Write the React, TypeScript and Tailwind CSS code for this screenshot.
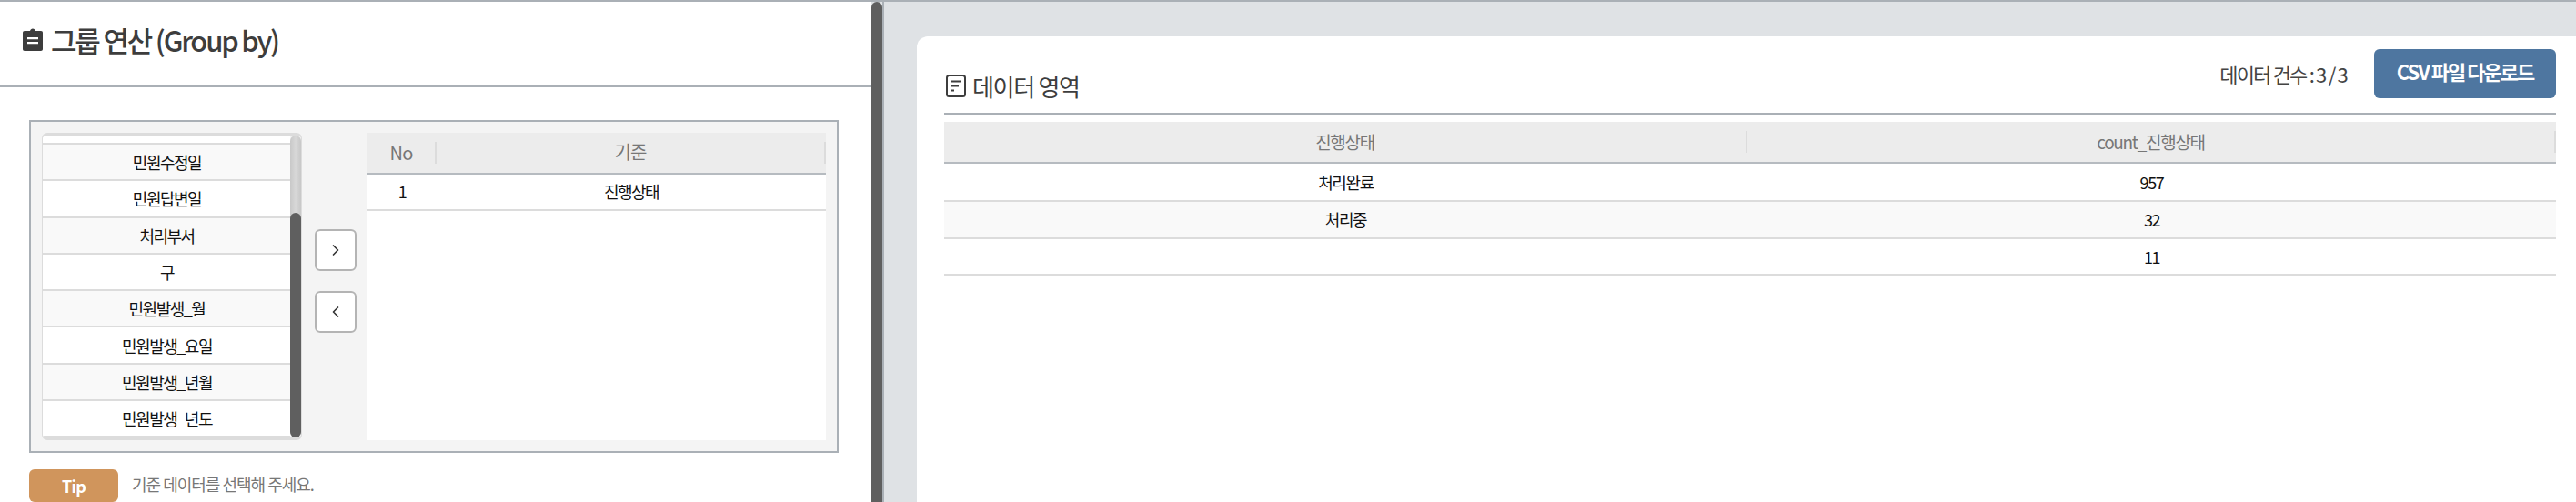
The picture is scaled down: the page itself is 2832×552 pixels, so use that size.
import { ChevronLeft, ChevronRight } from "lucide-react"

const font = "font-['Noto_Sans_CJK_KR','Noto_Sans',sans-serif]"

const columns = ["민원수정일", "민원답변일", "처리부서", "구", "민원발생_월", "민원발생_요일", "민원발생_년월", "민원발생_년도"]

const rows = [
  { name: "처리완료", count: "957", className: "h-[42px] bg-white" },
  { name: "처리중", count: "32", className: "h-[41px] bg-[#f9f9f9]" },
  { name: "", count: "11", className: "h-[40px] bg-white" },
]

function ClipboardIcon() {
  return (
    <svg width="24" height="26" viewBox="0 0 24 26" className="shrink-0">
      <path
        fillRule="evenodd"
        fill="#3d3d3d"
        d="M8 3h1c.4-1.600 1.600-2.500 3-2.500s2.600.9 3 2.500h6c1.500 0 2 .8 2 2v18c0 1.200-.8 2-2 2H3c-1.200 0-2-.8-2-2V5c0-1.200.8-2 2-2h5zM6 10v2.200h12V10H6zm0 5v2.200h12V15H6z"
      />
    </svg>
  )
}

function DataIcon() {
  return (
    <svg width="22" height="25" viewBox="0 0 22 25" fill="none" stroke="#3d3d3d" strokeWidth="2" className="shrink-0 ml-[2px]">
      <rect x="1" y="1" width="20" height="23" rx="2.500" />
      <path d="M6 7.500h10M6 12.500h8M6 17.500h3" />
    </svg>
  )
}

function MoveButton({ children }: { children: React.ReactNode }) {
  return (
    <button className="w-[46px] h-[46px] flex items-center justify-center bg-white border-2 border-[#b4b4b4] rounded-md text-[#333]">
      {children}
    </button>
  )
}

export default function App() {
  return (
    <div className={`${font} w-[2832px] h-[552px] overflow-hidden flex border-t-2 border-[#aab0b6] bg-[#dfe2e5]`}>
      {/* Left panel */}
      <div className="w-[958px] shrink-0 bg-white">
        <div className="h-[94px] border-b-2 border-[#aab0b6] pl-6 pb-[8px] flex items-center gap-2">
          <ClipboardIcon />
          <h2 className="text-[31px] font-medium tracking-[-2.200px] text-[#3d3d3d]">그룹 연산 (Group by)</h2>
        </div>

        <div className="px-8 pt-9">
          <div className="w-[890px] h-[366px] border-2 border-[#aab0b6] bg-[#f4f4f4] p-3 flex">
            {/* Column list */}
            <div className="w-[286px] h-[338px] flex border-y-[3px] border-x border-[#dcdcdc] rounded-md overflow-hidden">
              <div className="flex-1 flex flex-col overflow-hidden">
                <div className="h-[10px] shrink-0 bg-white border-b-2 border-[#dcdcdc]" />
                {columns.map((name, i) => (
                  <div
                    key={name}
                    className={`h-[40.300px] shrink-0 pt-[1px] pl-[1px] flex items-center justify-center border-b-2 border-[#dcdcdc] text-[18px] tracking-[-1.500px] text-[#111] ${i % 2 === 0 ? "bg-[#f9f9f9]" : "bg-white"}`}
                  >
                    {name}
                  </div>
                ))}
              </div>
              <div className="w-3 shrink-0 pt-[85px] rounded-full bg-[linear-gradient(90deg,#c8c8c8,#d8d8d8,#c8c8c8)]">
                <div className="h-full rounded-md bg-[#5f5f5f]" />
              </div>
            </div>

            {/* Move buttons */}
            <div className="w-[72px] shrink-0 pt-[106px] pl-[2px] flex flex-col items-center gap-[22px]">
              <MoveButton>
                <ChevronRight size={20} />
              </MoveButton>
              <MoveButton>
                <ChevronLeft size={20} />
              </MoveButton>
            </div>

            {/* Selected table */}
            <div className="w-[504px] h-[338px] bg-white">
              <div className="h-[46px] flex items-center bg-[#ececec] border-b-2 border-[#b6bbc0] text-[20px] tracking-[-0.8px] text-[#777]">
                <div className="w-[76px] h-6 flex items-center justify-center border-r-2 border-[#dcdcdc]">No</div>
                <div className="flex-1 h-6 pb-[2px] flex items-center justify-center border-r-2 border-[#dcdcdc]">기준</div>
              </div>
              <div className="h-10 pb-[2px] flex items-center border-b-2 border-[#dcdcdc] text-[18px] tracking-[-1.500px] text-[#111]">
                <div className="w-[76px] text-center">1</div>
                <div className="flex-1 text-center">진행상태</div>
              </div>
            </div>
          </div>

          <div className="mt-[18px] flex items-center gap-[15px]">
            <div className="w-[98px] h-9 rounded-md bg-[#d0955c] text-white text-[18px] font-bold tracking-[-0.8px] flex items-center justify-center">Tip</div>
            <span className="pb-[3px] text-[18px] tracking-[-1px] text-[#777]">기준 데이터를 선택해 주세요.</span>
          </div>
        </div>
      </div>

      {/* Splitter */}
      <div className="w-[12px] shrink-0 bg-[#5f5f5f] rounded-t-md" />
      <div className="w-[2px] shrink-0 bg-[#aab0b6]" />

      {/* Right panel */}
      <div className="flex-1 pl-9 pt-[38px]">
        <div className="h-full bg-white rounded-tl-xl pl-[30px] pr-[22px]">
          <div className="h-[86px] flex items-center justify-between border-b-2 border-[#aab0b6]">
            <div className="flex items-center gap-[7px] pt-[24px]">
              <DataIcon />
              <h3 className="text-[26px] tracking-[-1.300px] text-[#3d3d3d]">데이터 영역</h3>
            </div>
            <div className="flex items-center gap-[30px] pb-[2px]">
              <span className="text-[22px] tracking-[-1.800px] text-[#444]">데이터 건수 : 3 / 3</span>
              <button className="w-[200px] h-[54px] rounded-md bg-[#4e76a0] text-white text-[22px] font-bold tracking-[-2px] pb-1.5">CSV 파일 다운로드</button>
            </div>
          </div>

          <div className="mt-2 h-[46px] flex items-center bg-[#ececec] border-b-2 border-[#b6bbc0] text-[19px] tracking-[-1.300px] text-[#777]">
            <div className="w-[883px] h-6 flex items-center justify-center border-r-2 border-[#dcdcdc]">진행상태</div>
            <div className="flex-1 h-6 flex items-center justify-center border-r-2 border-[#dcdcdc]">count_진행상태</div>
          </div>
          {rows.map((row) => (
            <div
              key={row.count}
              className={`${row.className} flex items-center border-b-2 border-[#dcdcdc] text-[18px] tracking-[-1.400px] text-[#111]`}
            >
              <div className="w-[883px] text-center">{row.name}</div>
              <div className="flex-1 text-center">{row.count}</div>
            </div>
          ))}
        </div>
      </div>
    </div>
  )
}
